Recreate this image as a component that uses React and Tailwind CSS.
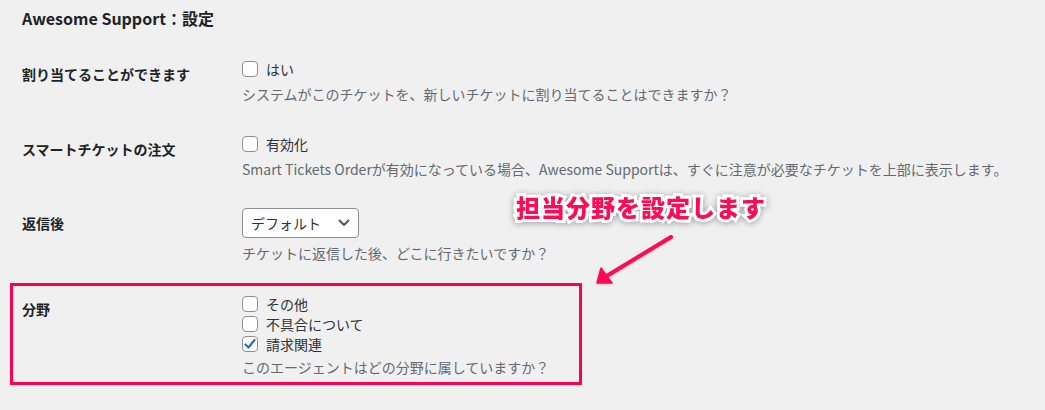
import React from 'react';

// チェックボックス（WP管理画面風）
const Checkbox = ({ checked }) => (
  <span className="w-[16px] h-[16px] shrink-0 rounded-[4px] border border-[#8c8f94] bg-white flex items-center justify-center">
    {checked && (
      <svg width="14" height="14" viewBox="0 0 14 14" fill="none">
        <path d="M2.5 7.5 L5.5 10.5 L11.5 3" stroke="#2271b1" strokeWidth="2.2" strokeLinecap="round" strokeLinejoin="round" />
      </svg>
    )}
  </span>
);

const CheckRow = ({ label, checked }) => (
  <div className="h-[16px] flex items-center gap-[8px]">
    <Checkbox checked={checked} />
    <span className="leading-[16px] text-[#2c3338]">{label}</span>
  </div>
);

const Desc = ({ children, className = '' }) => (
  <p className={`leading-[20px] text-[#646970] ${className}`}>{children}</p>
);

const Label = ({ children, className = '' }) => (
  <div className={`font-bold leading-[20px] text-[#1d2327] ${className}`}>{children}</div>
);

export default function App() {
  return (
    <div className="relative w-full h-[410px] overflow-hidden bg-[#f0f0f1] text-[14px] font-['Noto_Sans_CJK_JP',sans-serif]">
      <div className="pl-[22px]">
        <h1 className="pt-[6px] h-[30px] text-[16px] leading-[24px] font-semibold text-[#1d2327]">
          Awesome Support：設定
        </h1>

        {/* 割り当て */}
        <div className="grid grid-cols-[220px_1fr]">
          <Label className="pt-[34px]">割り当てることができます</Label>
          <div className="pt-[31px]">
            <CheckRow label="はい" />
            <Desc className="mt-[7px]">システムがこのチケットを、新しいチケットに割り当てることはできますか？</Desc>
          </div>
        </div>

        {/* スマートチケット */}
        <div className="grid grid-cols-[220px_1fr]">
          <Label className="pt-[35px]">スマートチケットの注文</Label>
          <div className="pt-[32px]">
            <CheckRow label="有効化" />
            <Desc className="mt-[7px]">
              Smart Tickets Orderが有効になっている場合、Awesome Supportは、すぐに注意が必要なチケットを上部に表示します。
            </Desc>
          </div>
        </div>

        {/* 返信後 */}
        <div className="grid grid-cols-[220px_1fr]">
          <Label className="pt-[34px]">返信後</Label>
          <div className="pt-[29px]">
            <div className="w-[117px] h-[30px] rounded-[4px] border border-[#8c8f94] bg-white flex items-center justify-between pl-[8px] pr-[8px] text-[#2c3338]">
              <span>デフォルト</span>
              <svg width="12" height="8" viewBox="0 0 12 8" fill="none">
                <path d="M1.5 1.5 L6 6 L10.5 1.5" stroke="#50575e" strokeWidth="2" strokeLinecap="round" strokeLinejoin="round" />
              </svg>
            </div>
            <Desc className="mt-[5px]">チケットに返信した後、どこに行きたいですか？</Desc>
          </div>
        </div>

        {/* 分野（赤枠） */}
        <div className="mt-[20px] ml-[-12px] w-[572px] border-[3px] border-[#ff0050] pl-[9px] pb-[5px] grid grid-cols-[220px_1fr]">
          <Label className="pt-[13px]">分野</Label>
          <div className="pt-[10px]">
            <div className="flex flex-col gap-[4px]">
              <CheckRow label="その他" />
              <CheckRow label="不具合について" />
              <CheckRow label="請求関連" checked />
            </div>
            <Desc className="mt-[5px]">このエージェントはどの分野に属していますか？</Desc>
          </div>
        </div>
      </div>

      {/* 注釈 */}
      <div className="absolute left-[516px] top-[192px] text-[24px] leading-[30px] font-black tracking-[1px] text-[#ff0a54] [paint-order:stroke_fill] [-webkit-text-stroke:6px_#ffffff] [filter:drop-shadow(0_1px_3px_rgba(0,0,0,0.35))]">
        担当分野を設定します
      </div>
      <svg className="absolute left-0 top-0 [filter:drop-shadow(0_1px_1px_rgba(0,0,0,0.2))]" width="1045" height="410" viewBox="0 0 1045 410" fill="none">
        <path d="M671 237 L605 277" stroke="#ff0a54" strokeWidth="4" strokeLinecap="round" />
        <path d="M597 283 L601 268 L612 283 Z" fill="#ff0a54" stroke="#ff0a54" strokeWidth="1.5" strokeLinejoin="round" />
      </svg>
    </div>
  );
}
